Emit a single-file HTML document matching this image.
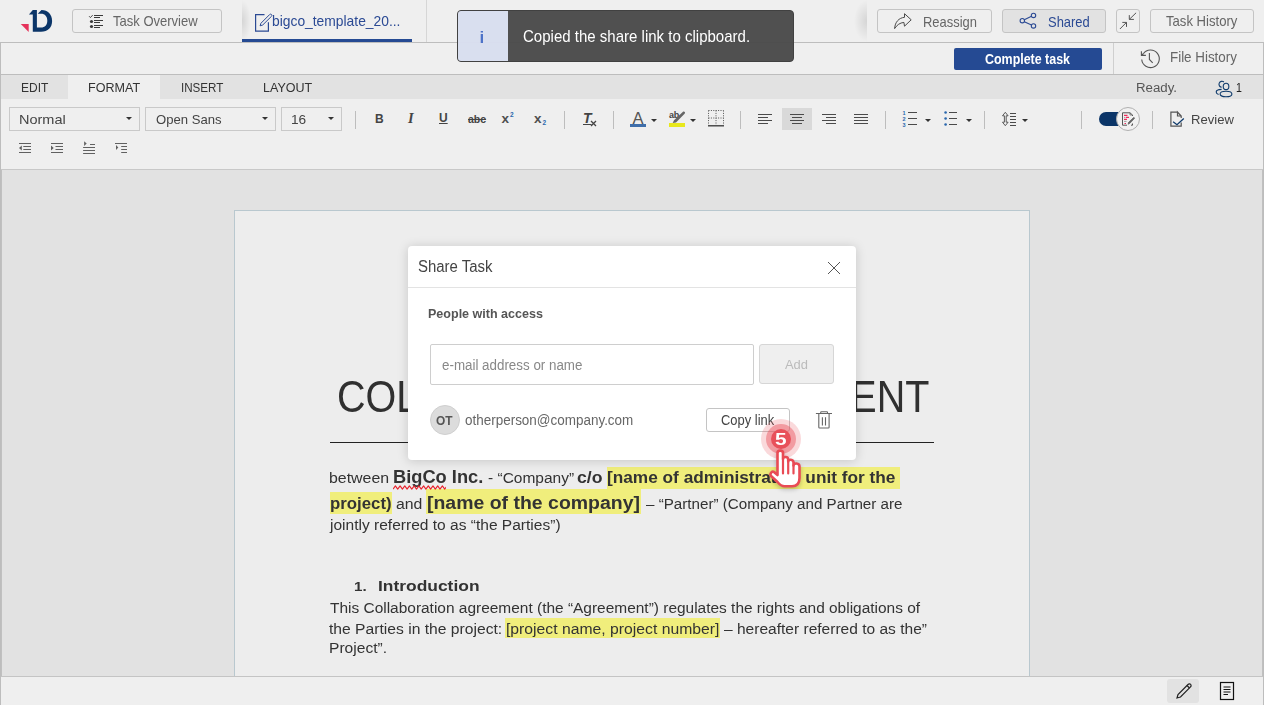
<!DOCTYPE html>
<html lang="en">
<head>
<meta charset="utf-8">
<title>Share Task</title>
<style>
*{box-sizing:border-box;margin:0;padding:0}
html,body{width:1264px;height:705px;overflow:hidden;background:#efefef;font-family:"Liberation Sans",sans-serif;color:#666}
.abs{position:absolute}
#app{position:relative;width:1264px;height:705px;overflow:hidden}
.t{position:absolute;white-space:nowrap;line-height:1}
/* header */
#hdr{left:0;top:0;width:1264px;height:42px;background:#efefef}
.hline{position:absolute;left:0;width:1264px;height:1px;background:#bdbdbd}
.btn{position:absolute;border:1px solid #c4c4c4;border-radius:3px;height:24px;top:9px;background:#efefef}
.btn.on{background:#e2e2e2}
/* tabs row */
#tabs{left:1px;top:75px;width:1262px;height:24px;background:#e2e2e2}
#tabact{left:68px;top:75px;width:92px;height:24px;background:#efefef}
.tab{font-size:14px;color:#333;top:80px}
/* toolbar */
.dd{position:absolute;top:107px;height:24px;border:1px solid #c9c9c9;background:#efefef}
.vsep{position:absolute;top:111px;width:1px;height:18px;background:#bdbdbd}
.caret{position:absolute;width:0;height:0;border-left:3px solid transparent;border-right:3px solid transparent;border-top:3px solid #333}
/* doc */
#docbg{left:1px;top:170px;width:1262px;height:506px;background:#e2e2e2}
#page{left:234px;top:210px;width:796px;height:480px;background:#ededed;border:1px solid #b9c8cf}
.doc{color:#333}
.hl{background:#f0ee7c}
/* dialog */
#dlg{left:408px;top:246px;width:448px;height:214px;background:#fff;border-radius:4px;box-shadow:0 1px 11px rgba(0,0,0,.17)}
</style>
</head>
<body>
<div id="app">

<!-- ===== header ===== -->
<div id="hdr" class="abs"></div>
<div class="hline" style="top:42px"></div>
<div class="hline" style="top:74px"></div>
<div class="abs" style="left:0;top:43px;width:1px;height:662px;background:#bdbdbd;z-index:3"></div>
<div class="abs" style="left:1px;top:170px;width:1px;height:506px;background:#c0c0c0;z-index:3"></div>
<div class="abs" style="left:1263px;top:43px;width:1px;height:662px;background:#bdbdbd;z-index:3"></div>
<div class="abs" style="left:1262px;top:170px;width:1px;height:506px;background:#c0c0c0;z-index:3"></div>

<!-- logo -->
<svg class="abs" style="left:20px;top:9px" width="34" height="24" viewBox="0 0 34 24">
  <path d="M0.75 15 H8.7 V23 Z" fill="#e5335b"/>
  <path d="M8.95 5.4 L12.8 1 H16.9 V18.600 H21 C25 18.600 27.3 16 27.3 11.8 C27.3 7.500 25 4.800 21 4.800 H17.700 L21.500 1 C28 1 32.100 5.500 32.100 11.900 C32.100 18.300 28 22.700 21 22.700 H12.8 V5.4 Z" fill="#0b3568"/>
</svg>

<!-- Task Overview -->
<div class="btn" style="left:72px;width:150px"></div>
<svg class="abs" style="left:88px;top:14px" width="16" height="15" viewBox="0 0 16 15" fill="none" stroke="#3a3a3a" stroke-width="1.1">
  <path d="M1.1 2.2 L2.4 3.600 L4.700 1.100" stroke-width="0.9"/>
  <circle cx="3.500" cy="7.500" r="1.600" fill="#3a3a3a" stroke="none"/>
  <circle cx="3.500" cy="12.500" r="1.600" fill="#3a3a3a" stroke="none"/>
  <path d="M6 1.500H15M6 3.500H12M6 6.500H15M6 8.500H12M6 11.500H15M6 13.500H12"/>
</svg>
<div class="t" id="t_taskov" style="left:112.70px;top:14px;font-size:14.2px;transform:scaleX(0.9176);transform-origin:0 0;color:#666">Task Overview</div>

<!-- file tab -->
<svg class="abs" style="left:254px;top:13px" width="20" height="20" viewBox="0 0 20 20" fill="none" stroke="#2b4a94" stroke-width="1.2">
  <path d="M10.500 1.700H1.600V18.100H14.400V9.200"/>
  <path d="M6.100 12.800 L6.900 10.300 L15.700 1.500 C16.200 1 17 1 17.500 1.500 C18 2 18 2.800 17.500 3.300 L8.700 12 Z" stroke-width="1"/>
</svg>
<div class="t" id="t_file" style="left:272.03px;top:14px;font-size:14.2px;transform:scaleX(0.9751);transform-origin:0 0;color:#2b4a94">bigco_template_20...</div>
<div class="abs" style="left:242px;top:39px;width:170px;height:3px;background:#254a93"></div>
<div class="abs" style="left:426px;top:0;width:1px;height:42px;background:#d6d6d6"></div>
<div class="abs" style="left:242px;top:0;width:12px;height:39px;background:radial-gradient(ellipse 9px 21px at 0 21px,rgba(0,0,0,.11),rgba(0,0,0,0) 100%)"></div>
<div class="abs" style="left:851px;top:0;width:16px;height:42px;background:radial-gradient(ellipse 13px 21px at 16px 21px,rgba(0,0,0,.11),rgba(0,0,0,0) 100%)"></div>

<!-- right buttons -->
<div class="btn" style="left:877px;width:115px"></div>
<svg class="abs" style="left:893px;top:12px" width="20" height="18" viewBox="0 0 20 18" fill="none" stroke="#4a4a4a" stroke-width="1" stroke-linejoin="miter">
  <path d="M11.500 1.700 L18.200 7.800 L11.500 14.200 L10.900 10.400 C7 10.800 4 12.800 1.600 16.600 C2 10 6 5.800 11.500 5.300 Z"/>
</svg>
<div class="t" id="t_reassign" style="left:922.80px;top:15px;font-size:14.2px;transform:scaleX(0.9121);transform-origin:0 0;color:#666">Reassign</div>

<div class="btn on" style="left:1002px;width:104px"></div>
<svg class="abs" style="left:1018px;top:12px" width="20" height="18" viewBox="0 0 20 18" fill="none" stroke="#2b4a94" stroke-width="1.1">
  <circle cx="4.300" cy="8.700" r="2.200"/><circle cx="15.500" cy="3.400" r="2.200"/><circle cx="15.500" cy="13.900" r="2.200"/>
  <path d="M6.300 7.750 L13.500 4.350M6.300 9.650 L13.500 12.950"/>
</svg>
<div class="t" id="t_shared" style="left:1048.18px;top:15px;font-size:14.2px;transform:scaleX(0.9125);transform-origin:0 0;color:#2b4a94">Shared</div>

<div class="btn" style="left:1116px;width:24px"></div>
<svg class="abs" style="left:1116px;top:9px" width="24" height="24" viewBox="0 0 24 24" fill="none" stroke="#555" stroke-width="1">
  <path d="M20.100 3.800 L13.300 10.400M13.300 6.100V10.400H17.900M3.900 20 L10.500 13.400M6.300 13.400H10.500V17.900"/>
</svg>

<div class="btn" style="left:1150px;width:104px"></div>
<div class="t" id="t_taskhist" style="left:1166.39px;top:14px;font-size:14.2px;transform:scaleX(0.9237);transform-origin:0 0;color:#666">Task History</div>

<!-- second row -->
<div class="abs" style="left:954px;top:48px;width:148px;height:22px;background:#254a93;border-radius:2px"></div>
<div class="t" id="t_complete" style="left:984.83px;top:53px;font-size:13.8px;transform:scaleX(0.9011);transform-origin:0 0;color:#fff;font-weight:bold">Complete task</div>
<div class="abs" style="left:1113px;top:43px;width:1px;height:31px;background:#cfcfcf"></div>
<svg class="abs" style="left:1140px;top:48px" width="22" height="22" viewBox="0 0 22 22" fill="none" stroke="#555" stroke-width="1.1">
  <path d="M3.300 5.750 A8.800 8.800 0 1 1 1.730 11.570"/>
  <path d="M1.400 3.200V7.400H5.900M1.400 7.400L3.300 5.750"/>
  <path d="M9.400 5.100V11.500L12.700 14.900"/>
</svg>
<div class="t" id="t_filehist" style="left:1169.67px;top:50px;font-size:14.2px;transform:scaleX(0.9432);transform-origin:0 0;color:#666">File History</div>

<!-- ===== ribbon tabs ===== -->
<div id="tabs" class="abs"></div>
<div id="tabact" class="abs"></div>
<div class="t tab" id="t_edit" style="left:20.72px;top:81px;font-size:13px;transform:scaleX(0.9235);transform-origin:0 0">EDIT</div>
<div class="t tab" id="t_format" style="left:88.19px;top:81px;font-size:13px;transform:scaleX(0.9658);transform-origin:0 0">FORMAT</div>
<div class="t tab" id="t_insert" style="left:180.50px;top:81px;font-size:13px;transform:scaleX(0.8933);transform-origin:0 0">INSERT</div>
<div class="t tab" id="t_layout" style="left:263.29px;top:81px;font-size:13px;transform:scaleX(0.9637);transform-origin:0 0">LAYOUT</div>
<div class="t" id="t_ready" style="left:1135.92px;top:82px;font-size:12.5px;transform:scaleX(1.0614);transform-origin:0 0;color:#555">Ready.</div>
<svg class="abs" style="left:1215px;top:79px" width="18" height="19" viewBox="0 0 18 19" fill="none" stroke="#0e3a6b" stroke-width="1.1">
  <ellipse cx="11.040" cy="7.400" rx="2.800" ry="3.200"/><ellipse cx="11" cy="15" rx="5.900" ry="2.800"/>
  <path d="M8.900 3 A3 3 0 1 0 6.700 8.300M6.600 10.400C3.500 10.500 1.200 11.500 1.200 13C1.200 14.200 2.200 15 3.600 15.600"/>
</svg>
<div class="t" id="t_one" style="left:1235.83px;top:82px;font-size:12.5px;transform:scaleX(0.8455);transform-origin:0 0;color:#222">1</div>

<!-- ===== toolbar ===== -->
<div class="dd" style="left:9px;width:131px"></div>
<div class="t" id="t_normal" style="left:19.46px;top:114px;font-size:12.7px;transform:scaleX(1.1433);transform-origin:0 0;color:#444">Normal</div>
<div class="caret" style="left:126px;top:117px"></div>
<div class="dd" style="left:145px;width:131px"></div>
<div class="t" id="t_opensans" style="left:155.78px;top:114px;font-size:12.7px;transform:scaleX(1.0328);transform-origin:0 0;color:#444">Open Sans</div>
<div class="caret" style="left:262px;top:117px"></div>
<div class="dd" style="left:281px;width:61px"></div>
<div class="t" id="t_16" style="left:291.42px;top:114px;font-size:12.7px;transform:scaleX(1.0778);transform-origin:0 0;color:#444">16</div>
<div class="caret" style="left:328px;top:117px"></div>

<div class="vsep" style="left:355px"></div>
<div class="t" id="t_B" style="left:375px;top:112.5px;font-size:12px;font-weight:bold;color:#444">B</div>
<div class="t" id="t_I" style="left:408px;top:111px;font-size:14.5px;font-weight:bold;font-style:italic;font-family:'Liberation Serif',serif;color:#444">I</div>
<div class="t" id="t_U" style="left:439px;top:112px;font-size:12px;font-weight:bold;color:#444;text-decoration:underline">U</div>
<div class="t" id="t_abc" style="left:468px;top:114px;font-size:10.5px;font-weight:bold;color:#444;text-decoration:line-through">abc</div>
<div class="t" id="t_x2" style="left:501.5px;top:111.5px;font-size:13.5px;font-weight:bold;color:#505050">x<span style="font-size:6.5px;color:#2b67ad;vertical-align:6px;margin-left:1px">2</span></div>
<div class="t" id="t_x3" style="left:534px;top:111.5px;font-size:13.5px;font-weight:bold;color:#505050">x<span style="font-size:6.5px;color:#2b67ad;vertical-align:-2px;margin-left:1px">2</span></div>
<div class="vsep" style="left:564px"></div>
<div class="t" id="t_Tx" style="left:583px;top:111px;font-size:14px;font-weight:bold;font-style:italic;color:#444;text-decoration:underline">T</div>
<svg class="abs" style="left:590px;top:120px" width="7" height="7" viewBox="0 0 7 7" stroke="#444" stroke-width="1.3"><path d="M1 1L6 6M6 1L1 6"/></svg>
<div class="vsep" style="left:613px"></div>

<div class="t" id="t_A" style="left:632.5px;top:110px;font-size:16.5px;color:#555">A</div>
<div class="abs" style="left:630px;top:124px;width:16px;height:3px;background:#3e6eaa"></div>
<div class="caret" style="left:651px;top:119px"></div>
<div class="t" id="t_ab" style="left:669px;top:111px;font-size:9px;color:#444;font-weight:bold;letter-spacing:-0.3px">ab</div>
<svg class="abs" style="left:670px;top:110px" width="18" height="14" viewBox="0 0 18 14"><path d="M2.700 13 L4 10.200 L13 1.800 C13.600 1.300 14.400 1.500 14.800 2 C15.200 2.500 15.100 3.200 14.600 3.700 L6 12.600 Z" fill="#666"/></svg>
<div class="abs" style="left:669px;top:123px;width:16px;height:4px;background:#e8e81c"></div>
<div class="caret" style="left:690px;top:119px"></div>
<svg class="abs" style="left:708px;top:110px" width="16" height="17" viewBox="0 0 16 17" fill="none" stroke="#555" stroke-width="1">
  <path d="M0.5 0.5H15.5M0.5 0.5V15M15.5 0.5V15M8 0.5V15M0.5 8H15.5" stroke-dasharray="1 1.4"/>
  <path d="M0 15.8H16" stroke="#333" stroke-width="1.3"/>
</svg>
<div class="vsep" style="left:740px"></div>

<svg class="abs" style="left:758px;top:113px" width="15" height="12" viewBox="0 0 15 12" stroke="#4a4a4a" stroke-width="1"><path d="M0 1.500H14M0 4.500H10M0 7.500H14M0 10.500H10"/></svg>
<div class="abs" style="left:782px;top:108px;width:30px;height:22px;background:#d9d9d9"></div>
<svg class="abs" style="left:790px;top:113px" width="15" height="12" viewBox="0 0 15 12" stroke="#4a4a4a" stroke-width="1"><path d="M0 1.500H14M2 4.500H12M0 7.500H14M2 10.500H12"/></svg>
<svg class="abs" style="left:822px;top:113px" width="15" height="12" viewBox="0 0 15 12" stroke="#4a4a4a" stroke-width="1"><path d="M0 1.500H14M4 4.500H14M0 7.500H14M4 10.500H14"/></svg>
<svg class="abs" style="left:854px;top:113px" width="15" height="12" viewBox="0 0 15 12" stroke="#4a4a4a" stroke-width="1"><path d="M0 1.500H14M0 4.500H14M0 7.500H14M0 10.500H14"/></svg>
<div class="vsep" style="left:885px"></div>

<!-- numbered list -->
<svg class="abs" style="left:902px;top:110px" width="16" height="18" viewBox="0 0 16 18" stroke="#4a4a4a" stroke-width="1"><path d="M6 2.500H15M6 8.500H15M6 14.500H15"/>
<g stroke="none" fill="#2b67ad" font-family="Liberation Sans, sans-serif" font-weight="bold" font-size="5.5"><text x="0.6" y="5">1</text><text x="0.6" y="11">2</text><text x="0.6" y="17">3</text></g></svg>
<div class="caret" style="left:925px;top:119px"></div>
<svg class="abs" style="left:944px;top:110px" width="16" height="18" viewBox="0 0 16 18" stroke="#4a4a4a" stroke-width="1"><path d="M5 2.500H13M5 8.500H13M5 14.500H13"/><g fill="#2b67ad" stroke="none"><circle cx="1.600" cy="2.500" r="1.300"/><circle cx="1.600" cy="8.500" r="1.300"/><circle cx="1.600" cy="14.500" r="1.300"/></g></svg>
<div class="caret" style="left:966px;top:119px"></div>
<div class="vsep" style="left:984px"></div>
<svg class="abs" style="left:1001px;top:111px" width="16" height="16" viewBox="0 0 16 16" fill="none" stroke="#4a4a4a" stroke-width="1"><path d="M9 2.500H15M9 5.500H15M9 8.500H15M9 11.500H15M9 14.500H15"/><path d="M4.300 1.300 L1.500 4.800 H3.400 V11.200 H1.500 L4.300 14.700 L7.100 11.200 H5.200 V4.800 H7.100 Z" stroke-width="0.9"/></svg>
<div class="caret" style="left:1022px;top:119px"></div>
<div class="vsep" style="left:1081px"></div>

<!-- toggle -->
<div class="abs" style="left:1098.5px;top:112px;width:38px;height:14px;border-radius:7px;background:#0b3568"></div>
<div class="abs" style="left:1116px;top:107px;width:24px;height:24px;border-radius:12px;background:#f1f1f1;border:1px solid #b0b0b0"></div>
<svg class="abs" style="left:1121px;top:111px" width="15" height="16" viewBox="0 0 15 16" fill="none" stroke="#555" stroke-width="1">
  <path d="M11.500 5V4L9 1.800H1.500V14.200H6M11.500 12.500V14.200H10"/><path d="M9 1.800V4H11.500" stroke-width="0.7"/>
  <path d="M3 4.400H6.500M5 6.400H8M3 8.400H6M3.500 12.500H5" stroke="#ee2e5d" stroke-width="1.1"/><path d="M3 6.400H4.500M3 10.400H5.500" stroke="#888" stroke-width="0.8"/>
  <path d="M7 13.300L7.700 11.200L12.500 6.600C13 6.200 13.800 6.900 13.400 7.500L8.900 12.300Z" fill="#666" stroke-width="0.6"/>
</svg>
<div class="vsep" style="left:1152px"></div>
<svg class="abs" style="left:1169px;top:110px" width="17" height="18" viewBox="0 0 17 18" fill="none" stroke="#555" stroke-width="1.2">
  <path d="M8.500 2.100H1.900V16.100H12.200V12.500M12.200 8V6L8.500 2.100V6H12.200"/><path d="M4.100 11.800L8 14.700L14.800 8.600" stroke="#0e3a6b" stroke-width="1.300"/>
</svg>
<div class="t" id="t_review" style="left:1191.45px;top:114px;font-size:12.7px;transform:scaleX(1.0296);transform-origin:0 0;color:#444">Review</div>

<!-- row 2 icons -->
<svg class="abs" style="left:18px;top:142px" width="14" height="12" viewBox="0 0 14 12" stroke="#606060" stroke-width="1" fill="none"><path d="M1 1.500H13M5.300 4.500H13M5.300 7.500H13M1 10.500H13"/><path d="M1 6L3.800 3.500V8.500Z" fill="#606060" stroke="none"/></svg>
<svg class="abs" style="left:50px;top:142px" width="14" height="12" viewBox="0 0 14 12" stroke="#606060" stroke-width="1" fill="none"><path d="M1 1.500H13M5.500 4.500H13M5.500 7.500H13M1 10.500H13"/><path d="M3.700 6L1 3.500V8.500Z" fill="#606060" stroke="none"/></svg>
<svg class="abs" style="left:82px;top:140px" width="14" height="15" viewBox="0 0 14 15" stroke="#606060" stroke-width="1" fill="none"><path d="M8 4.500H13M1.100 7.500H13M1.100 10.500H13M1.100 13.500H13"/><path d="M4.700 3.600L2.100 1.200V6Z" fill="#606060" stroke="none"/></svg>
<svg class="abs" style="left:114px;top:142px" width="14" height="12" viewBox="0 0 14 12" stroke="#606060" stroke-width="1" fill="none"><path d="M1 1.500H13M7.200 4.500H13M7.200 7.500H13M7.200 10.500H13"/><path d="M4.300 5.500L2 3V8Z" fill="#606060" stroke="none"/></svg>

<div class="hline" style="top:169px;background:#c8c8c8"></div>

<!-- ===== document ===== -->
<div id="docbg" class="abs"></div>
<div id="page" class="abs"></div>
<div class="t doc" id="t_title" style="left:336.96px;top:374px;font-size:45.2px;transform:scaleX(0.8748);transform-origin:0 0;color:#303030">COLLABORATION AGREEMENT</div>
<div class="abs" style="left:330px;top:442px;width:604px;height:1px;background:#222"></div>

<div class="abs hl" id="hb1" style="left:607px;top:467px;width:293px;height:22px"></div>
<div class="abs hl" id="hb2" style="left:330px;top:492px;width:62px;height:22px"></div>
<div class="abs hl" id="hb3" style="left:426px;top:489px;width:215px;height:25px"></div>
<div class="t doc" id="d_between" style="left:329.22px;top:471px;font-size:14.9px;transform:scaleX(1.0685);transform-origin:0 0">between</div>
<div class="t doc" id="d_bigco" style="left:392.89px;top:468px;font-size:18.8px;transform:scaleX(0.9725);transform-origin:0 0;font-weight:bold">BigCo Inc.</div>
<div class="t doc" id="d_company" style="left:488.36px;top:471px;font-size:14.9px;transform:scaleX(1.0411);transform-origin:0 0">- “Company”</div>
<div class="t doc" id="d_co" style="left:577.33px;top:470px;font-size:16px;transform:scaleX(1.1012);transform-origin:0 0;font-weight:bold">c/o</div>
<div class="t doc" id="d_hl1" style="left:607.18px;top:470px;font-size:16px;transform:scaleX(1.0777);transform-origin:0 0;font-weight:bold">[name of administrative unit for the</div>
<div class="t doc" id="d_project" style="left:329.56px;top:496px;font-size:16px;transform:scaleX(1.0502);transform-origin:0 0;font-weight:bold">project)</div>
<div class="t doc" id="d_and" style="left:395.69px;top:497px;font-size:14.9px;transform:scaleX(1.0627);transform-origin:0 0">and</div>
<div class="t doc" id="d_hl3" style="left:427.10px;top:494px;font-size:18.8px;transform:scaleX(1.0360);transform-origin:0 0;font-weight:bold">[name of the company]</div>
<div class="t doc" id="d_partner" style="left:645.85px;top:497px;font-size:14.9px;transform:scaleX(1.0196);transform-origin:0 0">– “Partner” (Company and Partner are</div>
<div class="t doc" id="d_jointly" style="left:330.04px;top:518px;font-size:14.9px;transform:scaleX(1.0435);transform-origin:0 0">jointly referred to as “the Parties”)</div>
<svg class="abs" style="left:393px;top:485px" width="53" height="5" viewBox="0 0 53 5" fill="none" stroke="#e8222c" stroke-width="1.1" stroke-linejoin="round"><path d="M0 4.100 L2.4 0.9 L4.7 4.1 L7.1 0.9 L9.4 4.1 L11.8 0.9 L14.1 4.1 L16.4 0.9 L18.8 4.1 L21.2 0.9 L23.5 4.1 L25.9 0.9 L28.2 4.1 L30.6 0.9 L32.9 4.1 L35.3 0.9 L37.6 4.1 L40.0 0.9 L42.3 4.1 L44.7 0.9 L47.0 4.1 L49.4 0.9 L51.7 4.1 L54.1 0.9"/></svg>

<div class="t doc" id="t_num" style="left:353.75px;top:580px;font-size:13px;transform:scaleX(1.1670);transform-origin:0 0;font-weight:bold;color:#333">1.</div>
<div class="t doc" id="t_intro" style="left:377.73px;top:578px;font-size:15.5px;transform:scaleX(1.1230);transform-origin:0 0;font-weight:bold;color:#333">Introduction</div>
<div class="abs hl" id="hb4" style="left:505px;top:618px;width:215px;height:20px"></div>
<div class="t doc" id="d_l4" style="left:329.64px;top:601px;font-size:14.9px;transform:scaleX(1.0377);transform-origin:0 0">This Collaboration agreement (the “Agreement”) regulates the rights and obligations of</div>
<div class="t doc" id="d_l5a" style="left:329.17px;top:622px;font-size:14.9px;transform:scaleX(1.0516);transform-origin:0 0">the Parties in the project:</div>
<div class="t doc" id="d_l5b" style="left:505.71px;top:622px;font-size:14.9px;transform:scaleX(1.0565);transform-origin:0 0">[project name, project number]</div>
<div class="t doc" id="d_l5c" style="left:724.45px;top:622px;font-size:14.9px;transform:scaleX(1.0434);transform-origin:0 0">– hereafter referred to as the”</div>
<div class="t doc" id="d_l6" style="left:329.06px;top:641px;font-size:14.9px;transform:scaleX(1.0471);transform-origin:0 0">Project”.</div>

<!-- status bar -->
<div class="abs" style="left:0;top:676px;width:1264px;height:29px;background:#efefef"></div>
<div class="hline" style="top:676px;background:#c4c4c4"></div>
<div class="abs" style="left:1167px;top:679px;width:32px;height:24px;background:#e2e2e2;border-radius:3px"></div>
<svg class="abs" style="left:1175px;top:682px" width="18" height="18" viewBox="0 0 18 18" fill="none" stroke="#222" stroke-width="1.2"><path d="M2 16L3 12.5L13 2.5C13.8 1.7 15 1.7 15.6 2.4C16.300 3.1 16.2 4.200 15.5 4.900L5.5 15Z"/><path d="M12 3.500L14.500 6"/></svg>
<svg class="abs" style="left:1219px;top:681px" width="16" height="20" viewBox="0 0 16 20" fill="none" stroke="#111" stroke-width="1.2"><rect x="1.5" y="1.500" width="13" height="17"/><path d="M4.500 6H11.500M4.500 8.500H11.500M4.500 11H11.500M4.500 13.500H9"/></svg>

<!-- ===== toast ===== -->
<div class="abs" style="left:457px;top:10px;width:337px;height:52px;background:#4b4b4b;border-radius:4px;border:1px solid #3c3c3c;overflow:hidden;opacity:.97">
  <div class="abs" style="left:0;top:0;width:50px;height:52px;background:#d9dff0"></div>
</div>
<div class="t" id="t_i" style="left:479.38px;top:29px;font-size:17px;transform:scaleX(1.5201);transform-origin:0 0;color:#4d72c8">i</div>
<div class="t" id="t_toast" style="left:523.21px;top:28px;font-size:16.2px;transform:scaleX(0.9278);transform-origin:0 0;color:#fff">Copied the share link to clipboard.</div>

<!-- ===== dialog ===== -->
<div id="dlg" class="abs"></div>
<div class="t" id="t_share" style="left:417.52px;top:259px;font-size:16px;transform:scaleX(0.9342);transform-origin:0 0;color:#444">Share Task</div>
<svg class="abs" style="left:827px;top:261px" width="14" height="14" viewBox="0 0 14 14" stroke="#555" stroke-width="1"><path d="M1 1L13 13M13 1L1 13"/></svg>
<div class="abs" style="left:408px;top:287px;width:448px;height:1px;background:#e3e3e3"></div>
<div class="t" id="t_people" style="left:427.79px;top:307px;font-size:13.2px;transform:scaleX(0.9504);transform-origin:0 0;font-weight:bold;color:#555">People with access</div>
<div class="abs" style="left:430px;top:344px;width:324px;height:41px;border:1px solid #cecece;border-radius:2px;background:#fff"></div>
<div class="t" id="t_email" style="left:441.75px;top:358px;font-size:14px;transform:scaleX(0.9548);transform-origin:0 0;color:#888">e-mail address or name</div>
<div class="abs" style="left:759px;top:344px;width:75px;height:40px;border:1px solid #d6d6d6;border-radius:3px;background:#efefef"></div>
<div class="t" id="t_add" style="left:784.82px;top:358px;font-size:13.7px;transform:scaleX(0.9443);transform-origin:0 0;color:#bbb">Add</div>
<div class="abs" style="left:430px;top:405px;width:30px;height:30px;border-radius:15px;background:#dcdcdc;border:1px solid #cfcfcf"></div>
<div class="t" id="t_ot" style="left:436.36px;top:414px;font-size:13.5px;transform:scaleX(0.8839);transform-origin:0 0;font-weight:bold;color:#555">OT</div>
<div class="t" id="t_other" style="left:464.55px;top:413px;font-size:14px;transform:scaleX(0.9615);transform-origin:0 0;color:#666">otherperson@company.com</div>
<div class="abs" style="left:706px;top:408px;width:84px;height:24px;border:1px solid #c4c4c4;border-radius:3px;background:#fff"></div>
<div class="t" id="t_copy" style="left:720.99px;top:413px;font-size:14.2px;transform:scaleX(0.9110);transform-origin:0 0;color:#444">Copy link</div>
<svg class="abs" style="left:815px;top:409px" width="18" height="22" viewBox="0 0 18 22" fill="none" stroke="#666" stroke-width="1.1" stroke-linejoin="round"><path d="M0.900 4.500H17M5.700 4.500V3.400Q5.700 2.700 6.400 2.700H11.800Q12.500 2.700 12.500 3.400V4.500M3.800 4.500V18.200Q3.800 19 4.600 19H13.300Q14.100 19 14.100 18.200V4.500M7.400 8.200V16.600M10.500 8.200V16.600"/></svg>

<!-- click marker -->
<div class="abs" style="left:761px;top:419px;width:40px;height:40px;border-radius:20px;background:rgba(232,80,90,.22)"></div>
<div class="abs" style="left:766px;top:424px;width:30px;height:30px;border-radius:15px;background:rgba(232,80,90,.45)"></div>
<div class="abs" style="left:771px;top:429px;width:20px;height:20px;border-radius:10px;background:#e8505a"></div>
<div class="t" id="t_five" style="left:775.23px;top:432px;font-size:16px;transform:scaleX(1.2997);transform-origin:0 0;font-weight:bold;color:#fff">5</div>
<svg class="abs" style="left:764px;top:444px;filter:drop-shadow(0 2px 2px rgba(0,0,0,.22))" width="42" height="50" viewBox="764 444 42 50" fill="#fff" stroke="#e94b55" stroke-width="2.6" stroke-linejoin="round" stroke-linecap="round">
  <path d="M777.500 472V453C777.500 449.800 783 449.800 783 453V459C783 456.200 788.200 456.200 788.200 459.500V461.500C788.200 459 793.500 459 793.500 462.500V465.500C793.500 462.600 799.500 462.600 799.500 466.500V478C799.500 483.500 796.500 486.300 792 486.300H784.500C781.500 486.300 780 485 777.500 482L771.300 476.300C769.300 474.300 771.500 470.500 774.300 472.200L777.500 475Z"/>
  <path d="M783 459V473.400M788.200 461.500V473.400M793.500 465.500V473.400" fill="none" stroke-width="2.2"/>
</svg>

</div>
</body>
</html>
